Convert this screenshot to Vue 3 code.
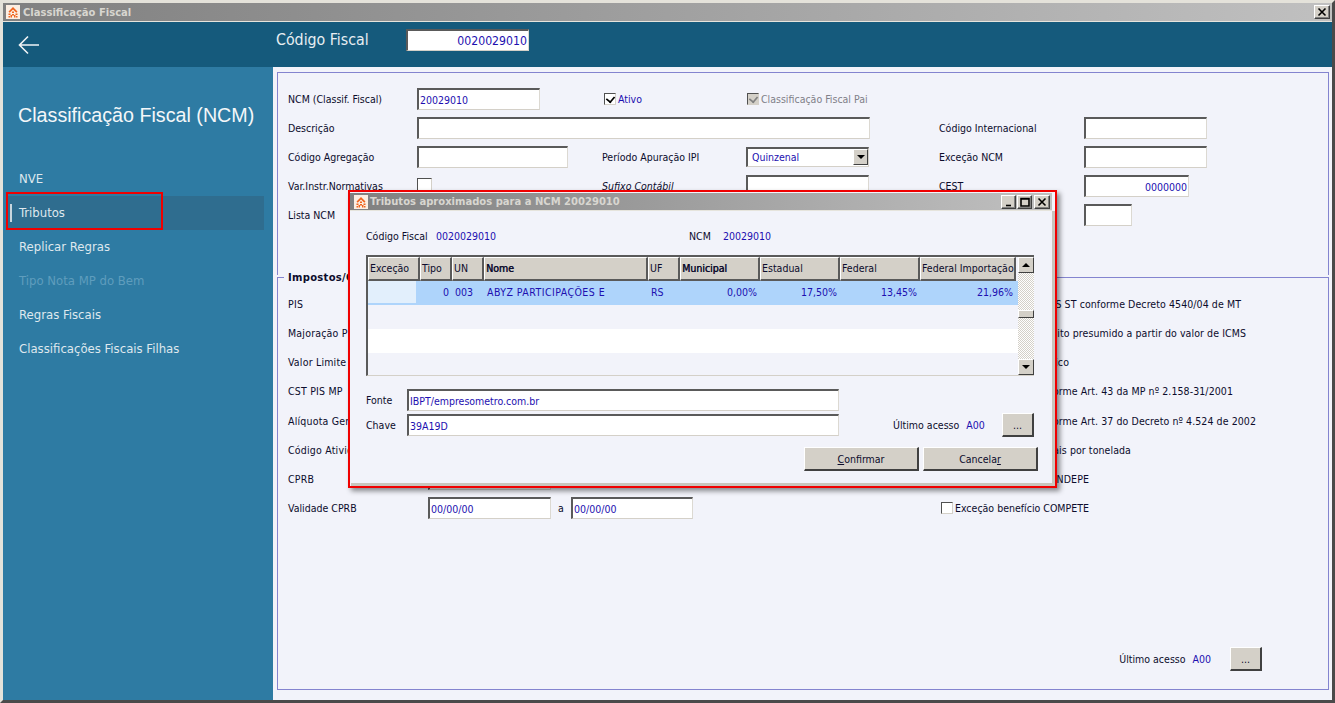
<script setup>
const menu = [
  { label: 'NVE' },
  { label: 'Tributos', active: true },
  { label: 'Replicar Regras' },
  { label: 'Tipo Nota MP do Bem', disabled: true },
  { label: 'Regras Fiscais' },
  { label: 'Classificações Fiscais Filhas' },
]
const lowerRows = [
  { label: 'PIS', note: 'Cálculo ICMS ST conforme Decreto 4540/04 de MT', end: 300 },
  { label: 'Majoração PIS', note: 'Cálculo crédito presumido a partir do valor de ICMS', end: 305 },
  { label: 'Valor Limite', note: 'Monofásico', end: 128 },
  { label: 'CST PIS MP', note: 'Crédito conforme Art. 43 da MP nº 2.158-31/2001', end: 292 },
  { label: 'Alíquota Geral', note: 'Crédito conforme Art. 37 do Decreto nº 4.524 de 2002', end: 315, shift: true },
  { label: 'Código Atividade', note: 'Valor em reais por tonelada', end: 190 },
  { label: 'CPRB', note: 'Benefício FUNDEPE', end: 148, cprb: true },
]
const columns = [
  { t: 'Exceção', w: 52 }, { t: 'Tipo', w: 32 }, { t: 'UN', w: 32 },
  { t: 'Nome', w: 164, strong: true }, { t: 'UF', w: 32 }, { t: 'Municipal', w: 80, strong: true },
  { t: 'Estadual', w: 80 }, { t: 'Federal', w: 80 }, { t: 'Federal Importação', w: 96 },
]
const cells = [
  { v: '', w: 52, blank: true }, { v: '0', w: 32, right: true }, { v: '003', w: 32 },
  { v: 'ABYZ PARTICIPAÇÕES E', w: 164, wide: true }, { v: 'RS', w: 32 }, { v: '0,00%', w: 80, right: true },
  { v: '17,50%', w: 80, right: true }, { v: '13,45%', w: 80, right: true }, { v: '21,96%', w: 96, right: true },
]
</script>

<template>
  <div class="app">
    <div class="window">
      <div class="titlebar">
        <svg class="logo" viewBox="0 0 14 14">
          <rect width="14" height="14" fill="#fbeee2" />
          <path d="M7 2 11.500 6.500 10.300 7.700 7 4.400 3.700 7.700 2.500 6.500Z" fill="#f0641e" />
          <path d="M2.500 8.500h2v1.500h-2zM4.500 10h1.500v2.500h-1.500zM8 10h1.500v2.500H8zM9.500 8.500h2V10h-2zM6 6.500h2v1.500H6zM6 9h2v1.500H6zM2.500 11h1.500v1.500H2.500zM10 11h1.500v1.500H10z" fill="#f0641e" />
        </svg>
        <span class="title-text">Classificação Fiscal</span>
        <span class="ctl close"><svg viewBox="0 0 10 10"><path d="M1.500 1.500 8.500 8.500M8.500 1.500 1.500 8.500" /></svg></span>
      </div>

      <header class="header">
        <div class="back">
          <svg viewBox="0 0 22 20" width="22" height="20">
            <path d="M21 10H2M10 1.500 1.500 10 10 18.500" />
          </svg>
        </div>
        <span class="header-label">Código Fiscal</span>
        <input class="field code-field" readonly value="0020029010" />
      </header>

      <div class="main">
        <aside class="sidebar">
          <h1 class="side-title">Classificação Fiscal (NCM)</h1>
          <nav class="menu">
            <div
              v-for="m in menu"
              :key="m.label"
              class="menu-item"
              :class="{ active: m.active, disabled: m.disabled }"
            >{{ m.label }}</div>
          </nav>
        </aside>

        <section class="content">
          <div class="top-box">
            <div class="grid-row">
              <label>NCM (Classif. Fiscal)</label>
              <div><input class="field w123" readonly value="20029010" /></div>
              <label class="check-label value offset"><span class="check on"></span>Ativo</label>
              <label class="check-label muted offset1"><span class="check on gray"></span>Classificação Fiscal Pai</label>
            </div>
            <div class="grid-row">
              <label>Descrição</label>
              <div class="span3"><input class="field w453" readonly /></div>
              <label class="col5">Código Internacional</label>
              <div><input class="field w123" readonly /></div>
            </div>
            <div class="grid-row">
              <label>Código Agregação</label>
              <div><input class="field w151" readonly /></div>
              <label>Período Apuração IPI</label>
              <div class="select">
                <span>Quinzenal</span>
                <span class="select-btn"><i class="arrow-down"></i></span>
              </div>
              <label>Exceção NCM</label>
              <div><input class="field w123" readonly /></div>
            </div>
            <div class="grid-row">
              <label>Var.Instr.Normativas</label>
              <div><span class="check big"></span></div>
              <label class="italic">Sufixo Contábil</label>
              <div><input class="field w123" readonly /></div>
              <label>CEST</label>
              <div><input class="field w105 right" readonly value="0000000" /></div>
            </div>
            <div class="grid-row">
              <label>Lista NCM</label>
              <div></div>
              <div></div>
              <div></div>
              <div></div>
              <div><input class="field w48" readonly /></div>
            </div>
          </div>

          <div class="group-box">
            <span class="legend">Impostos/Contribuições</span>
            <div v-for="r in lowerRows" :key="r.label" class="lower-row" :class="{ shift: r.shift }">
              <label class="wide-label">{{ r.label }}</label>
              <div><input v-if="r.cprb" class="field w123" readonly /></div>
              <div class="note" :style="{ width: r.end + 'px' }">{{ r.note }}</div>
            </div>
            <div class="lower-row">
              <label>Validade CPRB</label>
              <div class="dates">
                <input class="field w123" readonly value="00/00/00" />
                <span>a</span>
                <input class="field w122 tight" readonly value="00/00/00" />
              </div>
              <label class="check-label"><span class="check"></span>Exceção benefício COMPETE</label>
            </div>
            <div class="foot">
              <label>Último acesso</label>
              <span class="value">A00</span>
              <button class="btn dots">...</button>
            </div>
          </div>
        </section>
      </div>
    </div>

    <div class="modal">
      <div class="modal-title">
        <svg class="logo" viewBox="0 0 14 14">
          <rect width="14" height="14" fill="#fbeee2" />
          <path d="M7 2 11.500 6.500 10.300 7.700 7 4.400 3.700 7.700 2.500 6.500Z" fill="#f0641e" />
          <path d="M2.500 8.500h2v1.500h-2zM4.500 10h1.500v2.500h-1.500zM8 10h1.500v2.500H8zM9.500 8.500h2V10h-2zM6 6.500h2v1.500H6zM6 9h2v1.500H6zM2.500 11h1.500v1.500H2.500zM10 11h1.500v1.500H10z" fill="#f0641e" />
        </svg>
        <span class="modal-title-text">Tributos aproximados para a NCM 20029010</span>
        <span class="ctl"><svg viewBox="0 0 10 10"><path d="M2 8.500H7" /></svg></span>
        <span class="ctl"><svg viewBox="0 0 10 10"><path d="M1 1.500H9V9H1ZM1 2H9" /></svg></span>
        <span class="ctl last"><svg viewBox="0 0 10 10"><path d="M1.500 1.500 8.500 8.500M8.500 1.500 1.500 8.500" /></svg></span>
      </div>
      <div class="modal-body">
        <div class="info-row">
          <label class="info-a">Código Fiscal</label>
          <span class="value info-b">0020029010</span>
          <label class="info-c">NCM</label>
          <span class="value">20029010</span>
        </div>

        <div class="table">
          <div class="table-data">
            <div class="thead">
              <div
                v-for="c in columns"
                :key="c.t"
                class="th"
                :class="{ strong: c.strong }"
                :style="{ width: c.w + 'px' }"
              >{{ c.t }}</div>
            </div>
            <div class="tr selected">
              <div
                v-for="(c, i) in cells"
                :key="i"
                class="td"
                :class="{ right: c.right, blank: c.blank, wide: c.wide }"
                :style="{ width: c.w + 'px' }"
              >{{ c.v }}</div>
            </div>
            <div class="tr"></div>
            <div class="tr white"></div>
            <div class="tr short"></div>
          </div>
          <div class="scrollbar">
            <span class="sb-btn"><i class="arrow-up"></i></span>
            <div class="sb-track"><span class="sb-thumb"></span></div>
            <span class="sb-btn"><i class="arrow-down"></i></span>
          </div>
        </div>

        <div class="form-row first">
          <label class="form-label">Fonte</label>
          <input class="field w432" readonly value="IBPT/empresometro.com.br" />
        </div>
        <div class="form-row second">
          <label class="form-label">Chave</label>
          <input class="field w432" readonly value="39A19D" />
          <label class="ua">Último acesso</label>
          <span class="value ua-v">A00</span>
          <button class="btn dots">...</button>
        </div>
        <div class="actions">
          <button class="btn action"><u>C</u>onfirmar</button>
          <button class="btn action">Cancela<u>r</u></button>
        </div>
      </div>
    </div>
  </div>
</template>

<style>
html, body { margin: 0; padding: 0; overflow: hidden; }
</style>

<style scoped>
.app {
  position: relative;
  width: 1335px;
  height: 703px;
  overflow: hidden;
  font-family: "DejaVu Sans Condensed", "DejaVu Sans", sans-serif;
  font-stretch: condensed;
  font-size: 10.500px;
  color: #0c0c2c;
}
.window {
  box-sizing: border-box;
  width: 100%;
  height: 100%;
  display: flex;
  flex-direction: column;
  background: #d4d0c8;
  border-style: solid;
  border-width: 3px;
  border-color: #e4e2da #4a4a4a #4a4a4a #e4e2da;
  box-shadow: inset -1px -1px 0 #a8a69e;
}
.titlebar {
  display: flex;
  align-items: center;
  height: 18px;
  padding: 0 2px 0 3px;
  background: linear-gradient(90deg, #808080, #c0c0c0);
  border-bottom: 1px solid #e6e4dc;
  flex: none;
}
.logo { width: 14px; height: 14px; flex: none; }
.title-text {
  margin-left: 3px;
  flex: 1;
  font-family: "DejaVu Sans", sans-serif;
  font-stretch: normal;
  font-weight: 700;
  font-size: 10px;
  color: #d8d6d0;
}
.ctl {
  box-sizing: border-box;
  width: 16px;
  height: 14px;
  display: flex;
  align-items: center;
  justify-content: center;
  background: #d4d0c8;
  border-style: solid;
  border-width: 1px;
  border-color: #fff #404040 #404040 #fff;
  box-shadow: inset -1px -1px 0 #808080;
}
.ctl svg { width: 10px; height: 10px; }
.ctl path { fill: none; stroke: #000; stroke-width: 1.600; }

.header {
  height: 45px;
  flex: none;
  display: flex;
  align-items: flex-start;
  background: #155a7c;
}
.back {
  width: 273px;
  flex: none;
  padding-left: 15px;
  box-sizing: border-box;
  margin-top: 13px;
  display: flex;
}
.back svg { fill: none; stroke: #f0f4f6; stroke-width: 1.600; }
.header-label {
  width: 130px;
  flex: none;
  margin-top: 8px;
  font-size: 15.800px;
  line-height: 20px;
  color: #e8eef2;
}

.main { flex: 1; display: flex; min-height: 0; }
.sidebar {
  width: 270px;
  flex: none;
  background: #2e7ba3;
  color: #e6edf2;
}
.side-title {
  margin: 36px 0 0 15px;
  font-family: "Liberation Sans", Arial, sans-serif;
  font-stretch: normal;
  font-size: 19.700px;
  line-height: 24px;
  font-weight: 400;
  color: #f4f7f9;
  white-space: nowrap;
}
.menu { margin-top: 35px; display: flex; flex-direction: column; }
.menu-item {
  position: relative;
  box-sizing: border-box;
  height: 34px;
  line-height: 33px;
  margin-left: 4px;
  width: 257px;
  padding-left: 12px;
  font-size: 13px;
  color: #dfe8ee;
}
.menu-item.active { background: #2f6d8f; }
.menu-item.active::before {
  content: "";
  position: absolute;
  left: 3px;
  top: 8px;
  width: 2px;
  height: 18px;
  background: #c8d6de;
}
.menu-item.active::after {
  content: "";
  position: absolute;
  left: -1px;
  top: -4px;
  width: 157px;
  height: 38px;
  box-sizing: border-box;
  border: 2px solid #f00000;
}
.menu-item.disabled { color: #5f9dbd; }

.content {
  flex: 1;
  min-width: 0;
  display: flex;
  flex-direction: column;
  background: #f2f3fa;
  padding: 5px 3px 10px 4px;
}
.top-box {
  box-sizing: border-box;
  height: 203px;
  flex: none;
  padding: 11px 10px 0;
  border: 1px solid #8484cf;
  border-bottom: 0;
}
.grid-row {
  display: grid;
  grid-template-columns: 129px 185px 144px 193px 145px 1fr;
  height: 29px;
  align-items: center;
}
.span3 { grid-column: span 3; }
.col5 { grid-column: 5; }
label { white-space: nowrap; }
.wide-label { letter-spacing: .2px; }
.value { color: #1d0fb0; }
.muted { color: #808088; }
.italic { font-style: italic; }
.offset { padding-left: 2px; }
.offset1 { padding-left: 1px; }

.field {
  box-sizing: border-box;
  height: 22px;
  padding: 1px 1px 0;
  margin: 0;
  display: block;
  background: #fff;
  font: inherit;
  color: #1d0fb0;
  border-style: solid;
  border-width: 2px 1px 1px 2px;
  border-color: #5a5a5a #dcd9d2 #d4d0c8 #5a5a5a;
  outline: none;
}
.code-field { width: 123px; height: 22px; text-align: right; margin-top: 7px; font-size: 12.200px; }
.right { text-align: right; }
.w48 { width: 48px; }
.w105 { width: 105px; }
.w122 { width: 122px; }
.w123 { width: 123px; }
.w151 { width: 151px; }
.w432 { width: 432px; }
.w453 { width: 453px; }
.tight { margin-left: -1px; }

.check-label { display: flex; align-items: center; gap: 2px; }
.check {
  box-sizing: border-box;
  display: block;
  position: relative;
  width: 12px;
  height: 12px;
  flex: none;
  background: #fff;
  border-style: solid;
  border-width: 1px;
  border-color: #505050 #d4d0c8 #d4d0c8 #505050;
}
.check.big { width: 15px; height: 15px; }
.check.gray { background: #d4d0c8; }
.check.on::after {
  content: "";
  position: absolute;
  left: 2px;
  top: 0;
  width: 5px;
  height: 7px;
  border-style: solid;
  border-color: #000;
  border-width: 0 2px 2px 0;
  transform: rotate(40deg) scale(.85);
}
.check.gray::after { border-color: #808080; }

.select {
  box-sizing: border-box;
  width: 123px;
  height: 20px;
  display: flex;
  align-items: center;
  justify-content: space-between;
  background: #fff;
  padding-left: 4px;
  color: #1d0fb0;
  border-style: solid;
  border-width: 2px 1px 1px 2px;
  border-color: #5a5a5a #d4d0c8 #d4d0c8 #5a5a5a;
}
.select-btn {
  box-sizing: border-box;
  width: 15px;
  height: 16px;
  display: flex;
  align-items: center;
  justify-content: center;
  background: #d4d0c8;
  border-style: solid;
  border-width: 1px;
  border-color: #fff #404040 #404040 #fff;
}
.arrow-down, .arrow-up {
  display: block;
  width: 0;
  height: 0;
  border-left: 4px solid transparent;
  border-right: 4px solid transparent;
}
.arrow-down { border-top: 4px solid #000; }
.arrow-up { border-bottom: 4px solid #000; }

.group-box {
  position: relative;
  flex: 1;
  margin-top: 2px;
  padding: 11px 10px 18px;
  display: flex;
  flex-direction: column;
  border: 1px solid #8484cf;
}
.legend {
  position: absolute;
  left: 6px;
  top: -7px;
  padding: 0 4px;
  background: #f2f3fa;
  font-family: "DejaVu Sans", sans-serif;
  font-stretch: normal;
  font-weight: 700;
  font-size: 10px;
  letter-spacing: .3px;
  line-height: 14px;
}
.lower-row {
  display: grid;
  grid-template-columns: 140px 513px 1fr;
  height: 29px;
  flex: none;
  align-items: center;
}
.lower-row.shift { margin-top: 1px; }
.note { display: flex; justify-content: flex-end; white-space: nowrap; letter-spacing: .08px; }
.dates { display: flex; align-items: center; gap: 7px; }
.dates span { width: 7px; }
.foot {
  margin-top: auto;
  margin-right: 56px;
  display: flex;
  align-items: center;
  justify-content: flex-end;
  gap: 7px;
}
.foot .btn { margin-left: 12px; }

.btn {
  box-sizing: border-box;
  padding: 0;
  background: #d4d0c8;
  font: inherit;
  color: #0c0c2c;
  border-style: solid;
  border-width: 1px 2px 2px 1px;
  border-color: #fff #404040 #404040 #fff;
  outline: none;
}
.dots { width: 32px; height: 24px; }

.modal {
  position: absolute;
  left: 348px;
  top: 190px;
  width: 709px;
  height: 298px;
  box-sizing: border-box;
  display: flex;
  flex-direction: column;
  background: #f2f3fa;
  border: 2px solid #f00000;
  box-shadow: 3px 3px 5px rgba(0, 0, 0, .45);
}
.modal-title {
  height: 17px;
  flex: none;
  display: flex;
  align-items: center;
  margin: 1px 3px 0 0;
  padding: 0 2px 0 4px;
  background: linear-gradient(90deg, #808080, #c0c0c0);
  border-bottom: 1px solid #e6e4dc;
}
.modal-title .ctl { width: 15px; margin-left: 1px; }
.modal-title .ctl.last { width: 16px; margin-left: 2px; }
.modal-title-text {
  flex: 1;
  margin-left: 2px;
  font-family: "DejaVu Sans", sans-serif;
  font-stretch: normal;
  font-weight: 700;
  font-size: 10px;
  color: #d8d6d0;
}
.modal-body {
  flex: 1;
  box-sizing: border-box;
  padding: 0 18px 0 15px;
  margin-left: 1px;
  border-right: 3px solid #c8c5bd;
  border-bottom: 3px solid #c8c5bd;
}
.info-row { display: flex; align-items: center; height: 20px; margin-top: 15px; }
.info-a { width: 70px; }
.info-b { width: 253px; }
.info-c { width: 34px; }

.table {
  box-sizing: border-box;
  width: 668px;
  height: 121px;
  margin-top: 9px;
  display: flex;
  border-style: solid;
  border-width: 2px 0 1px 2px;
  border-color: #5a5a5a #d4d0c8 #d4d0c8 #5a5a5a;
}
.table-data { width: 650px; flex: none; }
.thead { display: flex; height: 24px; }
.th {
  box-sizing: border-box;
  flex: none;
  height: 24px;
  line-height: 21px;
  padding-left: 1px;
  white-space: nowrap;
  overflow: hidden;
  background: #d4d0c8;
  border-style: solid;
  border-width: 1px 2px 2px 1px;
  border-color: #fff #5a5a5a #5a5a5a #fff;
}
.th.strong { text-shadow: .4px 0 0 #0c0c2c; }
.tr { display: flex; height: 24px; background: #f2f3fa; }
.tr.white { background: #fff; }
.tr.short { height: 22px; }
.tr.selected { background: #aed4fb; }
.td {
  box-sizing: border-box;
  flex: none;
  height: 24px;
  line-height: 23px;
  padding: 0 3px;
  white-space: nowrap;
  color: #1d0fb0;
}
.td.right { text-align: right; }
.td.wide { letter-spacing: .45px; }
.td.blank { background: #e2effc; height: 22px; width: 48px !important; margin-right: 4px; }
.scrollbar { width: 16px; flex: none; display: flex; flex-direction: column; }
.sb-btn {
  box-sizing: border-box;
  width: 16px;
  height: 16px;
  flex: none;
  display: flex;
  align-items: center;
  justify-content: center;
  background: #d4d0c8;
  border-style: solid;
  border-width: 1px;
  border-color: #fff #404040 #404040 #fff;
}
.sb-track {
  flex: 1;
  position: relative;
  background: repeating-conic-gradient(#d4d0c8 0 25%, #fff 0 50%) 0 0 / 2px 2px;
}
.sb-thumb {
  position: absolute;
  left: 0;
  top: 37px;
  box-sizing: border-box;
  width: 16px;
  height: 8px;
  background: #d4d0c8;
  border-style: solid;
  border-width: 1px;
  border-color: #fff #404040 #404040 #fff;
}

.form-row { display: flex; align-items: center; height: 24px; }
.form-row.first { margin-top: 12px; }
.form-row.second { margin-top: 1px; }
.form-label { width: 41px; flex: none; }
.ua { margin-left: 54px; }
.ua-v { margin-left: 7px; flex: 1; }
.actions {
  display: flex;
  justify-content: flex-end;
  gap: 4px;
  margin: 10px -4px 0 0;
}
.action { width: 115px; height: 24px; }
</style>
